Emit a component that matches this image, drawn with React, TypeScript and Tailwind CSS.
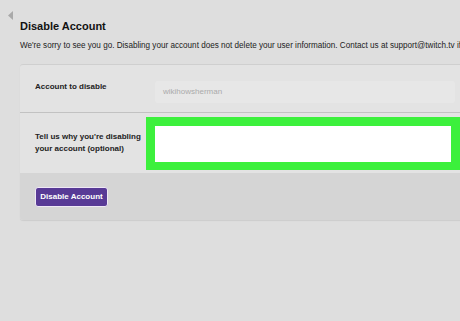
export default function App() {
  return (
    <div
      className="relative w-[460px] h-[321px] overflow-hidden bg-[#dedede] text-[#1a1a1a]"
      style={{ fontFamily: '"Liberation Sans", Arial, sans-serif' }}
    >
      <svg className="absolute left-[8px] top-[11px]" width="6" height="9" viewBox="0 0 6 9">
        <polygon points="5,0 5,9 0,4.5" fill="#a9a9a9" />
      </svg>
      <div className="pl-[20px] pt-[19px]">
        <h1 className="text-[11px] leading-[14px] font-bold text-[#111]">Disable Account</h1>
        <p className="mt-[8px] text-[8.15px] leading-[10px] whitespace-nowrap text-[#222]">
          We're sorry to see you go. Disabling your account does not delete your user information. Contact us at support@twitch.tv if
        </p>
        <div className="mt-[13px] w-[470px] rounded-[3px] border-t border-[#cfcfcf] bg-[#e3e3e3] shadow-[0_1px_1px_rgba(0,0,0,0.08)] overflow-hidden">
          <div className="flex h-[48px] items-center border-b border-[#c2c2c2]">
            <div className="w-[135px] pl-[15px] text-[8px] leading-[10px] font-bold text-[#222] -mt-[4px]">Account to disable</div>
            <div className="flex h-[22px] w-[300px] items-center rounded-[3px] bg-[#e7e7e7] pl-[8px] text-[8px] text-[#ababab] mt-[6px]">
              wikihowsherman
            </div>
          </div>
          <div className="flex h-[60px] items-center">
            <div className="w-[126px] pl-[15px] text-[8px] leading-[12px] font-bold text-[#222]">
              Tell us why you're disabling
              <br />
              your account (optional)
            </div>
            <div className="h-[53px] w-[314px] border-[9px] border-b-[8px] border-[#3cf03c] bg-[#3cf03c]">
              <div className="h-full w-full bg-white" />
            </div>
          </div>
          <div className="flex h-[47px] items-center bg-[#d5d5d5] pl-[15px]">
            <button className="h-[20px] w-[73px] rounded-[3px] border border-[#efe8f6] bg-[#583a96] text-[8px] font-bold text-white">
              Disable Account
            </button>
          </div>
        </div>
      </div>
    </div>
  );
}
